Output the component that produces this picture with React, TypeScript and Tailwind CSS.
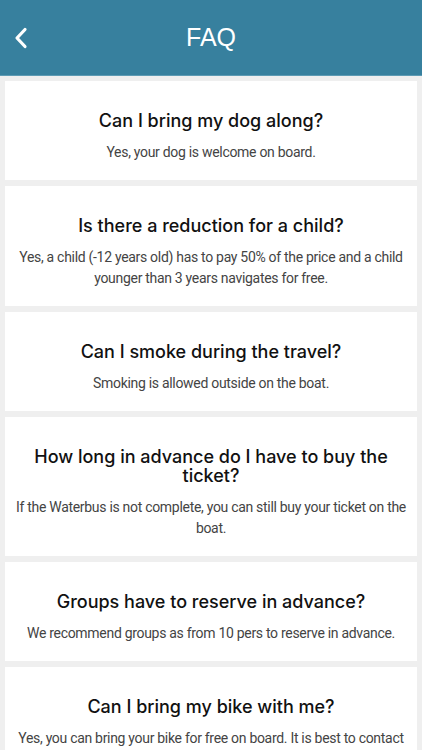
import React from "react";

const faqs = [
  { q: "Can I bring my dog along?", a: "Yes, your dog is welcome on board." },
  {
    q: "Is there a reduction for a child?",
    a: "Yes, a child (-12 years old) has to pay 50% of the price and a child younger than 3 years navigates for free.",
  },
  { q: "Can I smoke during the travel?", a: "Smoking is allowed outside on the boat." },
  {
    q: "How long in advance do I have to buy the ticket?",
    a: "If the Waterbus is not complete, you can still buy your ticket on the boat.",
  },
  {
    q: "Groups have to reserve in advance?",
    a: "We recommend groups as from 10 pers to reserve in advance.",
  },
  {
    q: "Can I bring my bike with me?",
    a: "Yes, you can bring your bike for free on board. It is best to contact us in advance when you come with a group.",
  },
];

export default function App() {
  return (
    <div className="min-h-[750px] w-[422px] bg-[#efefef]">
      <header className="relative flex h-[76px] items-center justify-center border-b border-[#5d9bb4] bg-[#37809e]">
        <button className="absolute left-[12px] top-[26px] flex h-[24px] w-[18px] items-center justify-center">
          <svg width="14" height="22" viewBox="0 0 14 22" fill="none">
            <path d="M11 2.5 L3 11 L11 19.5" stroke="white" strokeWidth="3.2" strokeLinecap="round" strokeLinejoin="round" />
          </svg>
        </button>
        <h1
          className="text-[25px] leading-none text-white"
          style={{ fontFamily: '"Liberation Sans", Arial, sans-serif' }}
        >
          FAQ
        </h1>
      </header>
      <main className="flex flex-col gap-[6px] px-[5px] pt-[5px]">
        {faqs.map((f) => (
          <section key={f.q} className="flex flex-col items-center bg-white px-[9px] pb-[17px] pt-[30px] text-center">
            <h2
              className="text-[18px] font-medium leading-[19px] text-[#111]"
              style={{ fontFamily: 'Inter, "Noto Sans", sans-serif' }}
            >
              {f.q}
            </h2>
            <p
              className="mt-[12px] text-[14px] leading-[21px] tracking-[-0.3px] text-[#444]"
              style={{ fontFamily: 'Roboto, "Liberation Sans", sans-serif' }}
            >
              {f.a}
            </p>
          </section>
        ))}
      </main>
    </div>
  );
}
